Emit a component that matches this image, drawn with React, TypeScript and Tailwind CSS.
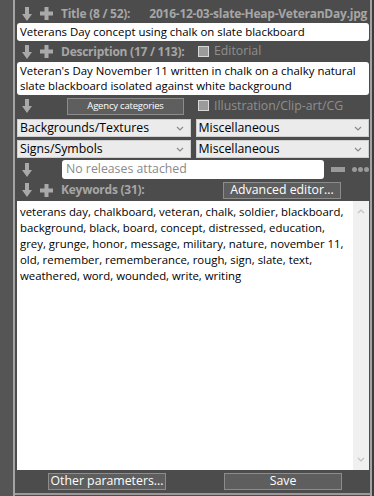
import React from "react";

const font = "font-['Open_Sans',sans-serif]";

function DownArrow() {
  return (
    <svg width="10" height="14" viewBox="0 0 10 14" className="shrink-0">
      <path d="M3 0h4v7h3l-5 7-5-7h3z" fill="#a9a9a9" />
    </svg>
  );
}

function Plus() {
  return (
    <svg width="13" height="13" viewBox="0 0 13 13" className="shrink-0">
      <path d="M4.5 0h4v4.5H13v4H8.5V13h-4V8.5H0v-4h4.5z" fill="#a9a9a9" />
    </svg>
  );
}

function Check() {
  return <span className="w-[11px] h-[11px] bg-[#9b9b9b] border border-[#d8d8d8] shrink-0" />;
}

function Chevron() {
  return (
    <svg width="8" height="5" viewBox="0 0 8 5" className="shrink-0">
      <path d="M1 1l3 3 3-3" stroke="#8a8a8a" strokeWidth="1.2" fill="none" />
    </svg>
  );
}

function Select({ value }: { value: string }) {
  return (
    <div className="flex-1 h-[18px] bg-[#ebebeb] border border-[#cfcfcf] flex items-center justify-between pl-[2px] pr-[6px] text-[12.3px] text-black leading-none whitespace-nowrap">
      <span>{value}</span>
      <Chevron />
    </div>
  );
}

function Btn({ label, w, small }: { label: string; w: string; small?: boolean }) {
  return (
    <div
      className={`${w} h-[17px] bg-[#5e5e5e] border border-[#8c8c8c] flex items-center justify-center text-white leading-none whitespace-nowrap ${
        small ? "text-[9.5px] tracking-[-0.2px]" : "text-[12.3px]"
      }`}
    >
      {label}
    </div>
  );
}

const keywords =
  "veterans day, chalkboard, veteran, chalk, soldier, blackboard, background, black, board, concept, distressed, education, grey, grunge, honor, message, military, nature, november 11, old, remember, rememberance, rough, sign, slate, text, weathered, word, wounded, write, writing";

export default function App() {
  return (
    <div className={`w-[374px] h-[496px] flex bg-[#3c3c3c] ${font}`}>
      <div className="w-[13px] bg-[#555555]" />
      <div className="w-[2px] bg-[#a3a3a3]" />
      <div className="w-[355px] flex flex-col bg-[#4c4c4c] pl-[2px] pr-[1px] pt-[4px]">
        {/* title */}
        <div className="h-[19px] flex items-center text-[12px] tracking-[-0.25px] font-bold text-[#a6a6a6] leading-none whitespace-nowrap">
          <span className="ml-[5px]"><DownArrow /></span>
          <span className="ml-[8px]"><Plus /></span>
          <span className="ml-[8px]">Title (8 / 52):</span>
          <span className="ml-auto mr-[2px]">2016-12-03-slate-Heap-VeteranDay.jpg</span>
        </div>
        <div className="h-[18px] bg-white rounded-[3px] flex items-center px-[3px] text-[11.4px] text-black leading-none whitespace-nowrap">
          Veterans Day concept using chalk on slate blackboard
        </div>

        {/* description */}
        <div className="h-[19px] mt-[1px] flex items-center text-[12.3px] text-[#a6a6a6] leading-none whitespace-nowrap">
          <span className="ml-[5px]"><DownArrow /></span>
          <span className="ml-[8px]"><Plus /></span>
          <span className="ml-[8px] font-bold text-[12px] tracking-[-0.25px]">Description (17 / 113):</span>
          <span className="ml-auto w-[171px] flex items-center gap-[5px] text-[#8f8f8f]">
            <Check />
            Editorial
          </span>
        </div>
        <div className="h-[33px] mt-[1px] bg-white rounded-[3px] px-[3px] pt-[1px] text-[11.4px] text-black leading-[15px]">
          Veteran's Day November 11 written in chalk on a chalky natural slate blackboard isolated against white background
        </div>

        {/* agency */}
        <div className="h-[18px] mt-[2px] flex items-center text-[12.3px] text-[#8f8f8f] leading-none whitespace-nowrap">
          <span className="ml-[5px]"><DownArrow /></span>
          <span className="ml-[35px]"><Btn label="Agency categories" w="w-[117px]" small /></span>
          <span className="ml-auto w-[171px] flex items-center gap-[5px]">
            <Check />
            Illustration/Clip-art/CG
          </span>
        </div>
        <div className="mt-[4px] flex gap-[5px]">
          <Select value="Backgrounds/Textures" />
          <Select value="Miscellaneous" />
        </div>
        <div className="mt-[3px] flex gap-[5px]">
          <Select value="Signs/Symbols" />
          <Select value="Miscellaneous" />
        </div>

        {/* releases */}
        <div className="h-[19px] mt-[2px] flex items-center">
          <span className="ml-[5px]"><DownArrow /></span>
          <div className="ml-[30px] w-[265px] h-[19px] bg-white rounded-[3px] flex items-center px-[4px] text-[12.3px] text-[#8a8a8a] leading-none whitespace-nowrap">
            No releases attached
          </div>
          <span className="ml-[7px] w-[14px] h-[5px] bg-[#9a9a9a]" />
          <span className="ml-[7px] flex gap-[1px]">
            <span className="w-[5px] h-[5px] rounded-full bg-[#9a9a9a]" />
            <span className="w-[5px] h-[5px] rounded-full bg-[#9a9a9a]" />
            <span className="w-[5px] h-[5px] rounded-full bg-[#9a9a9a]" />
          </span>
        </div>

        {/* keywords */}
        <div className="h-[18px] mt-[2px] flex items-center text-[12px] tracking-[-0.25px] font-bold text-[#a6a6a6] leading-none whitespace-nowrap">
          <span className="ml-[5px]"><DownArrow /></span>
          <span className="ml-[8px]"><Plus /></span>
          <span className="ml-[8px]">Keywords (31):</span>
          <span className="ml-auto mr-[28px] font-normal tracking-normal"><Btn label="Advanced editor..." w="w-[118px]" /></span>
        </div>
        <div className="mt-[2px] h-[269px] bg-white flex">
          <div className="flex-1 px-[3px] pt-[3px] text-[11.4px] text-black leading-[16px]">{keywords}</div>
          <div className="w-[16px] bg-[#f0f0f0] flex flex-col items-center justify-between py-[8px]">
            <svg width="8" height="5" viewBox="0 0 8 5"><path d="M1 4l3-3 3 3" stroke="#c2c2c2" strokeWidth="1.2" fill="none" /></svg>
            <svg width="8" height="5" viewBox="0 0 8 5"><path d="M1 1l3 3 3-3" stroke="#c2c2c2" strokeWidth="1.2" fill="none" /></svg>
          </div>
        </div>

        {/* bottom */}
        <div className="mt-[3px] flex">
          <span className="ml-[31px]"><Btn label="Other parameters..." w="w-[118px]" /></span>
          <span className="ml-[58px]"><Btn label="Save" w="w-[118px]" /></span>
        </div>
        <div className="mt-[3px] h-[2px] bg-[#9a9a9a] -ml-[2px] -mr-[1px]" />
        <div className="flex-1 bg-[#4c4c4c]" />
      </div>
      <div className="w-[2px] bg-[#a3a3a3]" />
      <div className="flex-1 bg-[#3c3c3c]" />
    </div>
  );
}
